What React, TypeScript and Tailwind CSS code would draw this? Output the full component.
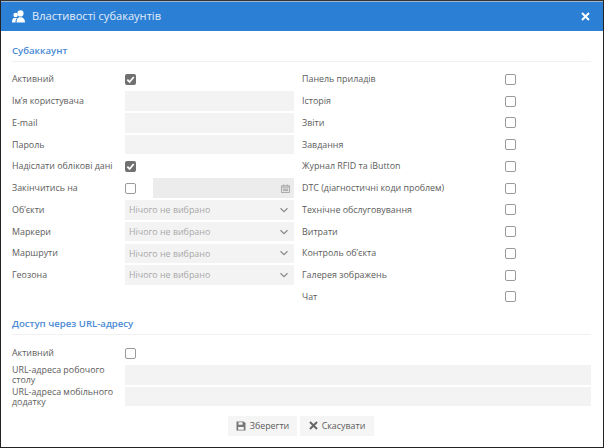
import React from 'react'

const leftText = 'text-[8.9px] leading-[10px] text-[#5c5c5c]'

function Check({ checked = false }: { checked?: boolean }) {
  if (checked) {
    return (
      <span className="flex h-[11px] w-[11px] items-center justify-center rounded-[2px] bg-[#707070]">
        <svg width="9" height="9" viewBox="0 0 10 10" fill="none">
          <path d="M1.5 5.2 4 7.8 8.6 2.2" stroke="#fff" strokeWidth="2" />
        </svg>
      </span>
    )
  }
  return <span className="block h-[11px] w-[11px] rounded-[2px] border border-[#9a9a9a] bg-white" />
}

function Row({ label, children }: { label: string; children?: React.ReactNode }) {
  return (
    <div className="flex h-[21.75px] items-center">
      <div className={`w-[113px] shrink-0 pr-[6px] ${leftText}`}>{label}</div>
      <div className="flex h-full min-w-0 flex-1 items-center">{children}</div>
    </div>
  )
}

function Field() {
  return <div className="h-[19.5px] w-full bg-[#f3f3f3]" />
}

function Picker() {
  return (
    <div className="flex h-[19.5px] w-full items-center justify-between bg-[#f3f3f3] pl-[4px] pr-[4px] text-[8.9px] text-[#a8a8a8]">
      <span>Нічого не вибрано</span>
      <svg width="10" height="10" viewBox="0 0 10 10" fill="none" className="mr-[1px]">
        <path d="M1.5 3.2 5 6.6 8.5 3.2" stroke="#8a8a8a" strokeWidth="1.2" />
      </svg>
    </div>
  )
}

function SectionTitle({ children }: { children: React.ReactNode }) {
  return (
    <div className="border-b border-[#f1f1f1] pb-[4px] text-[9.6px] font-semibold leading-[13px] text-[#4a8ad4]">
      {children}
    </div>
  )
}

const rightRows = [
  'Панель приладів',
  'Історія',
  'Звіти',
  'Завдання',
  'Журнал RFID та iButton',
  'DTC (діагностичні коди проблем)',
  'Технічне обслуговування',
  'Витрати',
  'Контроль об’єкта',
  'Галерея зображень',
  'Чат',
]

export default function App() {
  return (
    <div className="flex h-[448px] w-[604px] flex-col overflow-hidden border-x border-b border-t border-x-[#222] border-b-[#222] border-t-[#333] bg-white font-['Open_Sans',sans-serif]">
      {/* Header */}
      <div className="flex h-[30px] shrink-0 items-center justify-between border-t border-t-[#9fb6cc] bg-[#2b7fd4] pl-[11px] pr-[13px]">
        <div className="flex items-center gap-[6px]">
          <svg width="14" height="13" viewBox="0 0 14 13" fill="#fff">
            <circle cx="8.5" cy="3.4" r="3.1" />
            <path d="M4.500 12.500c0-3 .8-4.600 2.600-5.200h2.800c1.800.6 3.100 2.200 3.100 5.200z" />
            <circle cx="3.600" cy="5" r="2.200" />
            <path d="M0 12.500c0-2.600.5-4 2-4.600h2.600l.4.400C3.900 9 3.500 10.500 3.500 12.500z" />
          </svg>
          <span className="text-[11.1px] text-[#e3eefa]">Властивості субакаунтів</span>
        </div>
        <svg width="9" height="9" viewBox="0 0 9 9" fill="none">
          <path d="M1 1l7 7M8 1 1 8" stroke="#fff" strokeWidth="2" />
        </svg>
      </div>

      {/* Body */}
      <div className="flex flex-1 flex-col pl-[11px] pr-[12px] pt-[13px]">
        <SectionTitle>Субаккаунт</SectionTitle>
        <div className="mt-[6.5px] grid grid-cols-[282px_1fr] gap-x-[8px]">
          <div>
            <Row label="Активний"><Check checked /></Row>
            <Row label="Ім’я користувача"><Field /></Row>
            <Row label="E-mail"><Field /></Row>
            <Row label="Пароль"><Field /></Row>
            <Row label="Надіслати облікові дані"><Check checked /></Row>
            <Row label="Закінчитись на">
              <Check />
              <div className="ml-[17px] flex h-[19.5px] flex-1 items-center justify-end bg-[#ececec] pr-[4px]">
                <svg width="9" height="9" viewBox="0 0 10 10" fill="none" stroke="#a0a0a0">
                  <path d="M.5 2h9v7.500h-9zM.5 3.500h9M3 .5v2M7 .5v2" />
                  <path d="M2 5h6v3H2z" fill="#b5b5b5" stroke="none" />
                </svg>
              </div>
            </Row>
            <Row label="Об’єкти"><Picker /></Row>
            <Row label="Маркери"><Picker /></Row>
            <Row label="Маршрути"><Picker /></Row>
            <Row label="Геозона"><Picker /></Row>
          </div>
          <div>
            {rightRows.map((label) => (
              <div key={label} className="flex h-[21.75px] items-center justify-between pr-[75px]">
                <span className={leftText}>{label}</span>
                <Check />
              </div>
            ))}
          </div>
        </div>

        <div className="mt-[9.5px]">
          <SectionTitle>Доступ через URL-адресу</SectionTitle>
        </div>
        <div className="mt-[7px]">
          <Row label="Активний"><Check /></Row>
          <Row label="URL-адреса робочого столу"><Field /></Row>
          <Row label="URL-адреса мобільного додатку"><Field /></Row>
        </div>

        <div className="mt-[8.5px] flex justify-center gap-[3px] pr-[1px]">
          <button className="flex h-[19.5px] w-[69px] items-center justify-center gap-[4px] bg-[#f5f5f5] text-[8.9px] text-[#5c5c5c]">
            <svg width="10" height="10" viewBox="0 0 10 10">
              <path d="M.5.5h7.300L9.500 2.200v7.300h-9z" fill="#777" />
              <path d="M2.500 1.300h4v2.400h-4zM2.200 6h5.600v2.800H2.200z" fill="#f5f5f5" />
            </svg>
            Зберегти
          </button>
          <button className="flex h-[19.5px] w-[74px] items-center justify-center gap-[4px] bg-[#f5f5f5] text-[8.9px] text-[#5c5c5c]">
            <svg width="9" height="9" viewBox="0 0 9 9" fill="none">
              <path d="M1 1l7 7M8 1 1 8" stroke="#666" strokeWidth="2" />
            </svg>
            Скасувати
          </button>
        </div>
      </div>
    </div>
  )
}
